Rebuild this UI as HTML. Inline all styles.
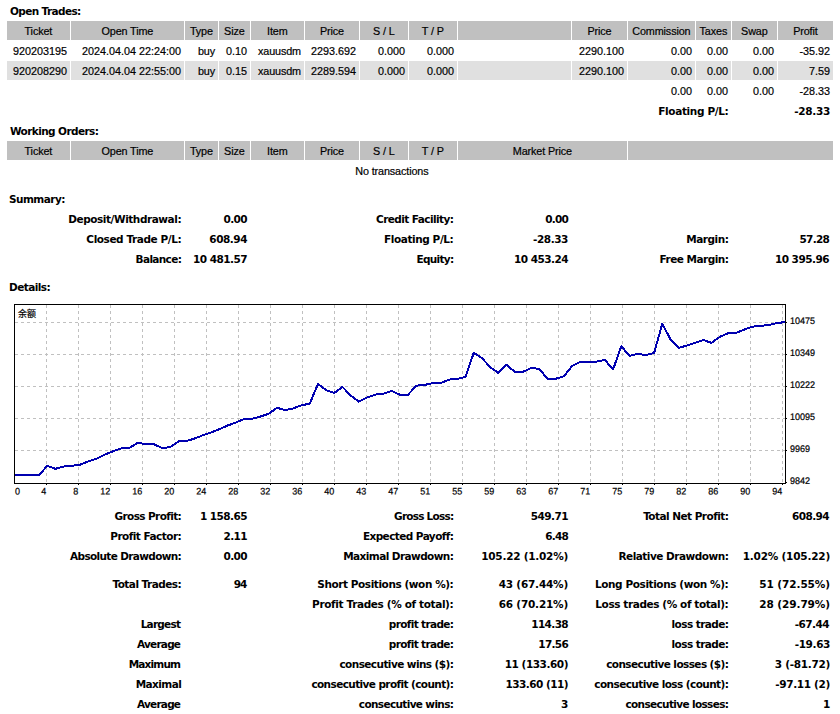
<!DOCTYPE html>
<html lang="en"><head><meta charset="utf-8"><title>Statement</title>
<style>
html,body{margin:0;padding:0;background:#fff;}
body{width:840px;height:714px;position:relative;overflow:hidden;font-family:"Liberation Sans","Noto Sans CJK SC",sans-serif;color:#000;}
.c{position:absolute;}
.t{position:absolute;height:19px;line-height:19px;padding:0 3px;font-size:10.8px;white-space:nowrap;margin-top:1px;-webkit-text-stroke:0.2px #000;}
.b{font-family:"DejaVu Sans","Liberation Sans",sans-serif;font-weight:bold;font-size:10.5px;-webkit-text-stroke:0;}
.ax text{font-family:"Liberation Sans","Noto Sans CJK SC",sans-serif;font-size:9px;fill:#000;stroke:#000;stroke-width:0.2px;}
.ax text.cjk{font-size:9px;stroke-width:0.2px;}
</style></head><body>
<div class="c" style="left:7px;top:21px;width:63px;height:19px;background:#C0C0C0"></div>
<div class="c" style="left:71px;top:21px;width:113px;height:19px;background:#C0C0C0"></div>
<div class="c" style="left:185px;top:21px;width:33px;height:19px;background:#C0C0C0"></div>
<div class="c" style="left:219px;top:21px;width:31px;height:19px;background:#C0C0C0"></div>
<div class="c" style="left:251px;top:21px;width:53px;height:19px;background:#C0C0C0"></div>
<div class="c" style="left:305px;top:21px;width:54px;height:19px;background:#C0C0C0"></div>
<div class="c" style="left:360px;top:21px;width:48px;height:19px;background:#C0C0C0"></div>
<div class="c" style="left:409px;top:21px;width:48px;height:19px;background:#C0C0C0"></div>
<div class="c" style="left:458px;top:21px;width:113px;height:19px;background:#C0C0C0"></div>
<div class="c" style="left:572px;top:21px;width:55px;height:19px;background:#C0C0C0"></div>
<div class="c" style="left:628px;top:21px;width:67px;height:19px;background:#C0C0C0"></div>
<div class="c" style="left:696px;top:21px;width:35px;height:19px;background:#C0C0C0"></div>
<div class="c" style="left:732px;top:21px;width:45px;height:19px;background:#C0C0C0"></div>
<div class="c" style="left:778px;top:21px;width:55px;height:19px;background:#C0C0C0"></div>
<div class="c" style="left:7px;top:61px;width:63px;height:19px;background:#E0E0E0"></div>
<div class="c" style="left:71px;top:61px;width:113px;height:19px;background:#E0E0E0"></div>
<div class="c" style="left:185px;top:61px;width:33px;height:19px;background:#E0E0E0"></div>
<div class="c" style="left:219px;top:61px;width:31px;height:19px;background:#E0E0E0"></div>
<div class="c" style="left:251px;top:61px;width:53px;height:19px;background:#E0E0E0"></div>
<div class="c" style="left:305px;top:61px;width:54px;height:19px;background:#E0E0E0"></div>
<div class="c" style="left:360px;top:61px;width:48px;height:19px;background:#E0E0E0"></div>
<div class="c" style="left:409px;top:61px;width:48px;height:19px;background:#E0E0E0"></div>
<div class="c" style="left:458px;top:61px;width:113px;height:19px;background:#E0E0E0"></div>
<div class="c" style="left:572px;top:61px;width:55px;height:19px;background:#E0E0E0"></div>
<div class="c" style="left:628px;top:61px;width:67px;height:19px;background:#E0E0E0"></div>
<div class="c" style="left:696px;top:61px;width:35px;height:19px;background:#E0E0E0"></div>
<div class="c" style="left:732px;top:61px;width:45px;height:19px;background:#E0E0E0"></div>
<div class="c" style="left:778px;top:61px;width:55px;height:19px;background:#E0E0E0"></div>
<div class="c" style="left:7px;top:141px;width:63px;height:19px;background:#C0C0C0"></div>
<div class="c" style="left:71px;top:141px;width:113px;height:19px;background:#C0C0C0"></div>
<div class="c" style="left:185px;top:141px;width:33px;height:19px;background:#C0C0C0"></div>
<div class="c" style="left:219px;top:141px;width:31px;height:19px;background:#C0C0C0"></div>
<div class="c" style="left:251px;top:141px;width:53px;height:19px;background:#C0C0C0"></div>
<div class="c" style="left:305px;top:141px;width:54px;height:19px;background:#C0C0C0"></div>
<div class="c" style="left:360px;top:141px;width:48px;height:19px;background:#C0C0C0"></div>
<div class="c" style="left:409px;top:141px;width:48px;height:19px;background:#C0C0C0"></div>
<div class="c" style="left:458px;top:141px;width:169px;height:19px;background:#C0C0C0"></div>
<div class="c" style="left:628px;top:141px;width:205px;height:19px;background:#C0C0C0"></div>
<div class="t b" style="left:7.00px;top:1px;width:387px;text-align:left;letter-spacing:-0.614px;">Open Trades:</div>
<div class="t" style="left:7.00px;top:21px;width:57px;text-align:center;letter-spacing:-0.120px;padding-left:2.880px;">Ticket</div>
<div class="t" style="left:71.00px;top:21px;width:107px;text-align:center;letter-spacing:-0.120px;padding-left:2.880px;">Open Time</div>
<div class="t" style="left:185.00px;top:21px;width:27px;text-align:center;letter-spacing:-0.120px;padding-left:2.880px;">Type</div>
<div class="t" style="left:219.00px;top:21px;width:25px;text-align:center;letter-spacing:-0.120px;padding-left:2.880px;">Size</div>
<div class="t" style="left:251.00px;top:21px;width:47px;text-align:center;letter-spacing:-0.120px;padding-left:2.880px;">Item</div>
<div class="t" style="left:305.00px;top:21px;width:48px;text-align:center;letter-spacing:-0.120px;padding-left:2.880px;">Price</div>
<div class="t" style="left:360.00px;top:21px;width:42px;text-align:center;letter-spacing:-0.120px;padding-left:2.880px;">S / L</div>
<div class="t" style="left:409.00px;top:21px;width:42px;text-align:center;letter-spacing:-0.120px;padding-left:2.880px;">T / P</div>
<div class="t" style="left:572.00px;top:21px;width:49px;text-align:center;letter-spacing:-0.120px;padding-left:2.880px;">Price</div>
<div class="t" style="left:628.00px;top:21px;width:61px;text-align:center;letter-spacing:-0.120px;padding-left:2.880px;">Commission</div>
<div class="t" style="left:696.00px;top:21px;width:29px;text-align:center;letter-spacing:-0.120px;padding-left:2.880px;">Taxes</div>
<div class="t" style="left:732.00px;top:21px;width:39px;text-align:center;letter-spacing:-0.120px;padding-left:2.880px;">Swap</div>
<div class="t" style="left:778.00px;top:21px;width:49px;text-align:center;letter-spacing:-0.120px;padding-left:2.880px;">Profit</div>
<div class="t" style="left:7.00px;top:41px;width:57px;text-align:right;">920203195</div>
<div class="t" style="left:71.00px;top:41px;width:107px;text-align:right;">2024.04.04 22:24:00</div>
<div class="t" style="left:185.00px;top:41px;width:27px;text-align:right;letter-spacing:-0.120px;padding-right:3.120px;">buy</div>
<div class="t" style="left:219.00px;top:41px;width:25px;text-align:right;">0.10</div>
<div class="t" style="left:251.00px;top:41px;width:47px;text-align:right;letter-spacing:-0.120px;padding-right:3.120px;">xauusdm</div>
<div class="t" style="left:305.00px;top:41px;width:48px;text-align:right;">2293.692</div>
<div class="t" style="left:360.00px;top:41px;width:42px;text-align:right;">0.000</div>
<div class="t" style="left:409.00px;top:41px;width:42px;text-align:right;">0.000</div>
<div class="t" style="left:572.00px;top:41px;width:49px;text-align:right;">2290.100</div>
<div class="t" style="left:628.00px;top:41px;width:61px;text-align:right;">0.00</div>
<div class="t" style="left:696.00px;top:41px;width:29px;text-align:right;">0.00</div>
<div class="t" style="left:732.00px;top:41px;width:39px;text-align:right;">0.00</div>
<div class="t" style="left:778.00px;top:41px;width:49px;text-align:right;">-35.92</div>
<div class="t" style="left:7.00px;top:61px;width:57px;text-align:right;">920208290</div>
<div class="t" style="left:71.00px;top:61px;width:107px;text-align:right;">2024.04.04 22:55:00</div>
<div class="t" style="left:185.00px;top:61px;width:27px;text-align:right;letter-spacing:-0.120px;padding-right:3.120px;">buy</div>
<div class="t" style="left:219.00px;top:61px;width:25px;text-align:right;">0.15</div>
<div class="t" style="left:251.00px;top:61px;width:47px;text-align:right;letter-spacing:-0.120px;padding-right:3.120px;">xauusdm</div>
<div class="t" style="left:305.00px;top:61px;width:48px;text-align:right;">2289.594</div>
<div class="t" style="left:360.00px;top:61px;width:42px;text-align:right;">0.000</div>
<div class="t" style="left:409.00px;top:61px;width:42px;text-align:right;">0.000</div>
<div class="t" style="left:572.00px;top:61px;width:49px;text-align:right;">2290.100</div>
<div class="t" style="left:628.00px;top:61px;width:61px;text-align:right;">0.00</div>
<div class="t" style="left:696.00px;top:61px;width:29px;text-align:right;">0.00</div>
<div class="t" style="left:732.00px;top:61px;width:39px;text-align:right;">0.00</div>
<div class="t" style="left:778.00px;top:61px;width:49px;text-align:right;">7.59</div>
<div class="t" style="left:628.00px;top:81px;width:61px;text-align:right;">0.00</div>
<div class="t" style="left:696.00px;top:81px;width:29px;text-align:right;">0.00</div>
<div class="t" style="left:732.00px;top:81px;width:39px;text-align:right;">0.00</div>
<div class="t" style="left:778.00px;top:81px;width:49px;text-align:right;">-28.33</div>
<div class="t b" style="left:572.40px;top:101px;width:153px;text-align:right;letter-spacing:-0.355px;padding-right:3.355px;">Floating P/L:</div>
<div class="t b" style="left:732.00px;top:101px;width:95px;text-align:right;letter-spacing:-0.300px;padding-right:3.300px;">-28.33</div>
<div class="t b" style="left:7.00px;top:121px;width:387px;text-align:left;letter-spacing:-0.589px;">Working Orders:</div>
<div class="t" style="left:7.00px;top:141px;width:57px;text-align:center;letter-spacing:-0.120px;padding-left:2.880px;">Ticket</div>
<div class="t" style="left:71.00px;top:141px;width:107px;text-align:center;letter-spacing:-0.120px;padding-left:2.880px;">Open Time</div>
<div class="t" style="left:185.00px;top:141px;width:27px;text-align:center;letter-spacing:-0.120px;padding-left:2.880px;">Type</div>
<div class="t" style="left:219.00px;top:141px;width:25px;text-align:center;letter-spacing:-0.120px;padding-left:2.880px;">Size</div>
<div class="t" style="left:251.00px;top:141px;width:47px;text-align:center;letter-spacing:-0.120px;padding-left:2.880px;">Item</div>
<div class="t" style="left:305.00px;top:141px;width:48px;text-align:center;letter-spacing:-0.120px;padding-left:2.880px;">Price</div>
<div class="t" style="left:360.00px;top:141px;width:42px;text-align:center;letter-spacing:-0.120px;padding-left:2.880px;">S / L</div>
<div class="t" style="left:409.00px;top:141px;width:42px;text-align:center;letter-spacing:-0.120px;padding-left:2.880px;">T / P</div>
<div class="t" style="left:458.00px;top:141px;width:163px;text-align:center;letter-spacing:-0.120px;padding-left:2.880px;">Market Price</div>
<div class="t" style="left:7.00px;top:161px;width:764px;text-align:center;letter-spacing:-0.120px;padding-left:2.880px;">No transactions</div>
<div class="t b" style="left:6.00px;top:189px;width:387px;text-align:left;letter-spacing:-0.550px;">Summary:</div>
<div class="t b" style="left:7.20px;top:209px;width:171px;text-align:right;letter-spacing:-0.440px;padding-right:3.440px;">Deposit/Withdrawal:</div>
<div class="t b" style="left:185.00px;top:209px;width:59px;text-align:right;letter-spacing:-0.600px;padding-right:3.600px;">0.00</div>
<div class="t b" style="left:250.40px;top:209px;width:200px;text-align:right;letter-spacing:-0.574px;padding-right:3.574px;">Credit Facility:</div>
<div class="t b" style="left:458.00px;top:209px;width:107px;text-align:right;letter-spacing:-0.780px;padding-right:3.780px;">0.00</div>
<div class="t b" style="left:7.20px;top:229px;width:171px;text-align:right;letter-spacing:-0.425px;padding-right:3.425px;">Closed Trade P/L:</div>
<div class="t b" style="left:185.00px;top:229px;width:59px;text-align:right;letter-spacing:-0.480px;padding-right:3.480px;">608.94</div>
<div class="t b" style="left:250.40px;top:229px;width:200px;text-align:right;letter-spacing:-0.415px;padding-right:3.415px;">Floating P/L:</div>
<div class="t b" style="left:458.00px;top:229px;width:107px;text-align:right;letter-spacing:-0.444px;padding-right:3.444px;">-28.33</div>
<div class="t b" style="left:572.40px;top:229px;width:153px;text-align:right;letter-spacing:-0.490px;padding-right:3.490px;">Margin:</div>
<div class="t b" style="left:731.00px;top:229px;width:95px;text-align:right;letter-spacing:-0.750px;padding-right:3.750px;">57.28</div>
<div class="t b" style="left:7.20px;top:249px;width:171px;text-align:right;letter-spacing:-0.653px;padding-right:3.653px;">Balance:</div>
<div class="t b" style="left:185.00px;top:249px;width:59px;text-align:right;letter-spacing:-0.525px;padding-right:3.525px;">10 481.57</div>
<div class="t b" style="left:250.40px;top:249px;width:200px;text-align:right;letter-spacing:-0.700px;padding-right:3.700px;">Equity:</div>
<div class="t b" style="left:458.00px;top:249px;width:107px;text-align:right;letter-spacing:-0.525px;padding-right:3.525px;">10 453.24</div>
<div class="t b" style="left:572.40px;top:249px;width:153px;text-align:right;letter-spacing:-0.516px;padding-right:3.516px;">Free Margin:</div>
<div class="t b" style="left:731.00px;top:249px;width:95px;text-align:right;letter-spacing:-0.524px;padding-right:3.524px;">10 395.96</div>
<div class="t b" style="left:6.00px;top:277px;width:387px;text-align:left;letter-spacing:-0.550px;">Details:</div>
<svg class="chart" width="840" height="214" viewBox="0 290 840 214" style="position:absolute;left:0;top:290px">
<path d="M46.5 305V483 M78.5 305V483 M110.5 305V483 M142.5 305V483 M174.5 305V483 M206.5 305V483 M238.5 305V483 M270.5 305V483 M302.5 305V483 M334.5 305V483 M366.5 305V483 M398.5 305V483 M430.5 305V483 M462.5 305V483 M494.5 305V483 M526.5 305V483 M558.5 305V483 M590.5 305V483 M622.5 305V483 M654.5 305V483 M686.5 305V483 M718.5 305V483 M750.5 305V483 M782.5 305V483 M15 322.5H785 M15 354.5H785 M15 386.5H785 M15 418.5H785 M15 450.5H785" stroke="#C0C0C0" stroke-width="1" stroke-dasharray="3 3" fill="none" shape-rendering="crispEdges"/>
<path d="M786 322.5h1 M786 354.5h1 M786 386.5h1 M786 418.5h1 M786 450.5h1 M786 482.5h1 M46.5 484v1 M78.5 484v1 M110.5 484v1 M142.5 484v1 M174.5 484v1 M206.5 484v1 M238.5 484v1 M270.5 484v1 M302.5 484v1 M334.5 484v1 M366.5 484v1 M398.5 484v1 M430.5 484v1 M462.5 484v1 M494.5 484v1 M526.5 484v1 M558.5 484v1 M590.5 484v1 M622.5 484v1 M654.5 484v1 M686.5 484v1 M718.5 484v1 M750.5 484v1 M782.5 484v1" stroke="#000" stroke-width="1" shape-rendering="crispEdges" fill="none"/>
<polyline points="14.5,475.0 22.7,475.0 30.9,475.0 39.1,475.0 47.3,465.9 55.5,468.8 63.7,466.5 71.9,465.9 80.1,464.6 88.3,461.5 96.5,458.8 104.7,454.6 112.9,451.3 121.1,448.4 129.3,448.0 137.5,443.0 145.7,444.0 153.9,444.2 162.1,448.0 170.3,447.1 178.5,441.5 186.7,441.0 194.9,438.4 203.1,435.2 211.3,432.3 219.5,429.2 227.7,425.5 235.9,422.5 244.1,419.0 252.3,418.8 260.5,416.5 268.7,413.8 276.9,407.8 285.1,410.0 293.3,408.4 301.5,405.3 309.7,403.7 317.9,384.0 326.1,390.2 334.3,392.9 342.5,386.9 350.7,395.6 358.9,401.6 367.1,397.5 375.3,394.6 383.5,393.8 391.7,390.9 399.9,394.8 408.1,394.7 416.3,385.6 424.5,385.0 432.7,383.1 440.9,383.0 449.1,379.6 457.3,379.0 465.5,376.9 473.7,352.9 481.9,358.1 490.1,367.0 498.3,373.0 506.5,364.6 514.7,371.9 522.9,371.9 531.1,367.9 539.3,369.0 547.5,378.8 555.7,378.8 563.9,376.2 572.1,366.0 580.3,361.9 588.5,361.9 596.7,361.6 604.9,360.0 613.1,369.4 621.3,346.2 629.5,355.9 637.7,353.8 645.9,355.1 654.1,352.9 662.3,323.8 670.5,339.4 678.7,347.8 686.9,345.6 695.1,342.9 703.3,340.0 711.5,342.9 719.7,336.9 727.9,333.4 736.1,332.9 744.3,329.6 752.5,326.6 760.7,325.9 768.9,325.0 777.1,323.1 785.3,322.0" fill="none" stroke="#0000B0" stroke-width="2" stroke-linejoin="round" stroke-linecap="square" shape-rendering="crispEdges"/>
<rect x="14.5" y="304.5" width="771" height="179" fill="none" stroke="#000" stroke-width="1" shape-rendering="crispEdges"/>
<g class="ax">
<text x="18" y="317" class="cjk">余额</text>
<text transform="translate(15,494.6) rotate(0.03) scale(1,1.06)">0</text>
<text transform="translate(46.3,494.6) rotate(0.03) scale(1,1.06)" text-anchor="end">4</text>
<text transform="translate(78.3,494.6) rotate(0.03) scale(1,1.06)" text-anchor="end">8</text>
<text transform="translate(110.3,494.6) rotate(0.03) scale(1,1.06)" text-anchor="end">12</text>
<text transform="translate(142.3,494.6) rotate(0.03) scale(1,1.06)" text-anchor="end">16</text>
<text transform="translate(174.3,494.6) rotate(0.03) scale(1,1.06)" text-anchor="end">20</text>
<text transform="translate(206.3,494.6) rotate(0.03) scale(1,1.06)" text-anchor="end">24</text>
<text transform="translate(238.3,494.6) rotate(0.03) scale(1,1.06)" text-anchor="end">28</text>
<text transform="translate(270.3,494.6) rotate(0.03) scale(1,1.06)" text-anchor="end">32</text>
<text transform="translate(302.3,494.6) rotate(0.03) scale(1,1.06)" text-anchor="end">36</text>
<text transform="translate(334.3,494.6) rotate(0.03) scale(1,1.06)" text-anchor="end">40</text>
<text transform="translate(366.3,494.6) rotate(0.03) scale(1,1.06)" text-anchor="end">43</text>
<text transform="translate(398.3,494.6) rotate(0.03) scale(1,1.06)" text-anchor="end">47</text>
<text transform="translate(430.3,494.6) rotate(0.03) scale(1,1.06)" text-anchor="end">51</text>
<text transform="translate(462.3,494.6) rotate(0.03) scale(1,1.06)" text-anchor="end">55</text>
<text transform="translate(494.3,494.6) rotate(0.03) scale(1,1.06)" text-anchor="end">59</text>
<text transform="translate(526.3,494.6) rotate(0.03) scale(1,1.06)" text-anchor="end">63</text>
<text transform="translate(558.3,494.6) rotate(0.03) scale(1,1.06)" text-anchor="end">67</text>
<text transform="translate(590.3,494.6) rotate(0.03) scale(1,1.06)" text-anchor="end">71</text>
<text transform="translate(622.3,494.6) rotate(0.03) scale(1,1.06)" text-anchor="end">75</text>
<text transform="translate(654.3,494.6) rotate(0.03) scale(1,1.06)" text-anchor="end">79</text>
<text transform="translate(686.3,494.6) rotate(0.03) scale(1,1.06)" text-anchor="end">82</text>
<text transform="translate(718.3,494.6) rotate(0.03) scale(1,1.06)" text-anchor="end">86</text>
<text transform="translate(750.3,494.6) rotate(0.03) scale(1,1.06)" text-anchor="end">90</text>
<text transform="translate(782.3,494.6) rotate(0.03) scale(1,1.06)" text-anchor="end">94</text>
<text transform="translate(790,324) rotate(0.03) scale(1,1.06)">10475</text>
<text transform="translate(790,356) rotate(0.03) scale(1,1.06)">10349</text>
<text transform="translate(790,388) rotate(0.03) scale(1,1.06)">10222</text>
<text transform="translate(790,420) rotate(0.03) scale(1,1.06)">10095</text>
<text transform="translate(790,452) rotate(0.03) scale(1,1.06)">9969</text>
<text transform="translate(790,484) rotate(0.03) scale(1,1.06)">9842</text>
</g></svg>
<div class="t b" style="left:7.20px;top:506px;width:171px;text-align:right;letter-spacing:-0.610px;padding-right:3.610px;">Gross Profit:</div>
<div class="t b" style="left:185.00px;top:506px;width:59px;text-align:right;letter-spacing:-0.557px;padding-right:3.557px;">1 158.65</div>
<div class="t b" style="left:250.40px;top:506px;width:200px;text-align:right;letter-spacing:-0.766px;padding-right:3.766px;">Gross Loss:</div>
<div class="t b" style="left:458.00px;top:506px;width:107px;text-align:right;letter-spacing:-0.552px;padding-right:3.552px;">549.71</div>
<div class="t b" style="left:572.40px;top:506px;width:153px;text-align:right;letter-spacing:-0.538px;padding-right:3.538px;">Total Net Profit:</div>
<div class="t b" style="left:731.00px;top:506px;width:95px;text-align:right;letter-spacing:-0.588px;padding-right:3.588px;">608.94</div>
<div class="t b" style="left:7.20px;top:526px;width:171px;text-align:right;letter-spacing:-0.536px;padding-right:3.536px;">Profit Factor:</div>
<div class="t b" style="left:185.00px;top:526px;width:59px;text-align:right;letter-spacing:-0.600px;padding-right:3.600px;">2.11</div>
<div class="t b" style="left:250.40px;top:526px;width:200px;text-align:right;letter-spacing:-0.574px;padding-right:3.574px;">Expected Payoff:</div>
<div class="t b" style="left:458.00px;top:526px;width:107px;text-align:right;letter-spacing:-0.780px;padding-right:3.780px;">6.48</div>
<div class="t b" style="left:7.20px;top:546px;width:171px;text-align:right;letter-spacing:-0.647px;padding-right:3.647px;">Absolute Drawdown:</div>
<div class="t b" style="left:185.00px;top:546px;width:59px;text-align:right;letter-spacing:-0.600px;padding-right:3.600px;">0.00</div>
<div class="t b" style="left:250.40px;top:546px;width:200px;text-align:right;letter-spacing:-0.573px;padding-right:3.573px;">Maximal Drawdown:</div>
<div class="t b" style="left:458.00px;top:546px;width:107px;text-align:right;letter-spacing:-0.246px;padding-right:3.246px;">105.22 (1.02%)</div>
<div class="t b" style="left:572.40px;top:546px;width:153px;text-align:right;letter-spacing:-0.497px;padding-right:3.497px;">Relative Drawdown:</div>
<div class="t b" style="left:732.00px;top:546px;width:95px;text-align:right;letter-spacing:-0.203px;padding-right:3.203px;">1.02% (105.22)</div>
<div class="t b" style="left:7.20px;top:574px;width:171px;text-align:right;letter-spacing:-0.535px;padding-right:3.535px;">Total Trades:</div>
<div class="t b" style="left:184.00px;top:574px;width:59px;text-align:right;letter-spacing:-1.200px;padding-right:4.200px;">94</div>
<div class="t b" style="left:250.40px;top:574px;width:200px;text-align:right;letter-spacing:-0.432px;padding-right:3.432px;">Short Positions (won %):</div>
<div class="t b" style="left:458.00px;top:574px;width:107px;text-align:right;letter-spacing:-0.210px;padding-right:3.210px;">43 (67.44%)</div>
<div class="t b" style="left:572.40px;top:574px;width:153px;text-align:right;letter-spacing:-0.411px;padding-right:3.411px;">Long Positions (won %):</div>
<div class="t b" style="left:732.00px;top:574px;width:95px;text-align:right;letter-spacing:-0.084px;padding-right:3.084px;">51 (72.55%)</div>
<div class="t b" style="left:250.40px;top:594px;width:200px;text-align:right;letter-spacing:-0.363px;padding-right:3.363px;">Profit Trades (% of total):</div>
<div class="t b" style="left:458.00px;top:594px;width:107px;text-align:right;letter-spacing:-0.210px;padding-right:3.210px;">66 (70.21%)</div>
<div class="t b" style="left:572.40px;top:594px;width:153px;text-align:right;letter-spacing:-0.407px;padding-right:3.407px;">Loss trades (% of total):</div>
<div class="t b" style="left:732.00px;top:594px;width:95px;text-align:right;letter-spacing:-0.084px;padding-right:3.084px;">28 (29.79%)</div>
<div class="t b" style="left:6.20px;top:614px;width:171px;text-align:right;letter-spacing:-0.760px;padding-right:3.760px;">Largest</div>
<div class="t b" style="left:250.40px;top:614px;width:200px;text-align:right;letter-spacing:-0.638px;padding-right:3.638px;">profit trade:</div>
<div class="t b" style="left:458.00px;top:614px;width:107px;text-align:right;letter-spacing:-0.624px;padding-right:3.624px;">114.38</div>
<div class="t b" style="left:572.40px;top:614px;width:153px;text-align:right;letter-spacing:-0.568px;padding-right:3.568px;">loss trade:</div>
<div class="t b" style="left:731.00px;top:614px;width:95px;text-align:right;letter-spacing:-0.552px;padding-right:3.552px;">-67.44</div>
<div class="t b" style="left:6.20px;top:634px;width:171px;text-align:right;letter-spacing:-0.790px;padding-right:3.790px;">Average</div>
<div class="t b" style="left:250.40px;top:634px;width:200px;text-align:right;letter-spacing:-0.638px;padding-right:3.638px;">profit trade:</div>
<div class="t b" style="left:458.00px;top:634px;width:107px;text-align:right;letter-spacing:-0.705px;padding-right:3.705px;">17.56</div>
<div class="t b" style="left:572.40px;top:634px;width:153px;text-align:right;letter-spacing:-0.568px;padding-right:3.568px;">loss trade:</div>
<div class="t b" style="left:732.00px;top:634px;width:95px;text-align:right;letter-spacing:-0.372px;padding-right:3.372px;">-19.63</div>
<div class="t b" style="left:6.20px;top:654px;width:171px;text-align:right;letter-spacing:-0.820px;padding-right:3.820px;">Maximum</div>
<div class="t b" style="left:250.40px;top:654px;width:200px;text-align:right;letter-spacing:-0.575px;padding-right:3.575px;">consecutive wins ($):</div>
<div class="t b" style="left:458.00px;top:654px;width:107px;text-align:right;letter-spacing:-0.462px;padding-right:3.462px;">11 (133.60)</div>
<div class="t b" style="left:572.40px;top:654px;width:153px;text-align:right;letter-spacing:-0.584px;padding-right:3.584px;">consecutive losses ($):</div>
<div class="t b" style="left:732.00px;top:654px;width:95px;text-align:right;letter-spacing:-0.300px;padding-right:3.300px;">3 (-81.72)</div>
<div class="t b" style="left:7.20px;top:674px;width:171px;text-align:right;letter-spacing:-0.580px;padding-right:3.580px;">Maximal</div>
<div class="t b" style="left:250.40px;top:674px;width:200px;text-align:right;letter-spacing:-0.599px;padding-right:3.599px;">consecutive profit (count):</div>
<div class="t b" style="left:458.00px;top:674px;width:107px;text-align:right;letter-spacing:-0.534px;padding-right:3.534px;">133.60 (11)</div>
<div class="t b" style="left:572.40px;top:674px;width:153px;text-align:right;letter-spacing:-0.572px;padding-right:3.572px;">consecutive loss (count):</div>
<div class="t b" style="left:732.00px;top:674px;width:95px;text-align:right;letter-spacing:-0.340px;padding-right:3.340px;">-97.11 (2)</div>
<div class="t b" style="left:6.20px;top:694px;width:171px;text-align:right;letter-spacing:-0.790px;padding-right:3.790px;">Average</div>
<div class="t b" style="left:250.40px;top:694px;width:200px;text-align:right;letter-spacing:-0.640px;padding-right:3.640px;">consecutive wins:</div>
<div class="t b" style="left:458.00px;top:694px;width:107px;text-align:right;letter-spacing:-0.300px;padding-right:3.300px;">3</div>
<div class="t b" style="left:572.40px;top:694px;width:153px;text-align:right;letter-spacing:-0.640px;padding-right:3.640px;">consecutive losses:</div>
<div class="t b" style="left:732.00px;top:694px;width:95px;text-align:right;letter-spacing:-0.300px;padding-right:3.300px;">1</div>
</body></html>
